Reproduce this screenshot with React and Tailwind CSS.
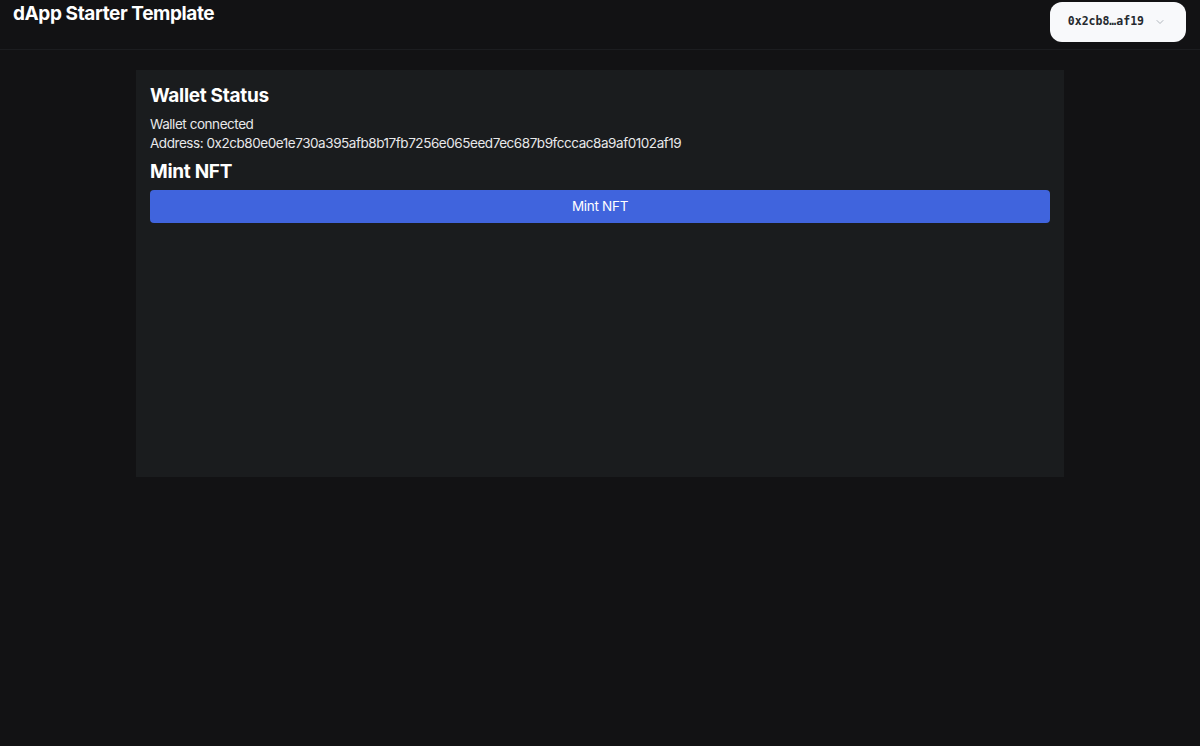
import { ChevronDown } from 'lucide-react'

const ADDRESS = '0x2cb80e0e1e730a395afb8b17fb7256e065eed7ec687b9fcccac8a9af0102af19'

function shorten(addr) {
  return `${addr.slice(0, 6)}…${addr.slice(-4)}`
}

export default function App() {
  return (
    <div className="min-h-screen bg-[#121214] text-white" style={{ fontFamily: 'Inter, "Noto Sans", sans-serif' }}>
      {/* Top bar */}
      <header className="flex items-start justify-between h-[50px] border-b border-[#1c1d20] pl-[13px] pr-[14px]">
        <h1 className="text-[19px] font-bold leading-[28px] tracking-[-0.4px]">dApp Starter Template</h1>
        <button className="mt-[2px] flex items-center gap-[10px] h-[40px] rounded-[12px] bg-[#f8f9fb] pl-[18px] pr-[20px] text-[#25292e]">
          <span className="text-[11.5px] font-bold" style={{ fontFamily: '"DejaVu Sans Mono", monospace' }}>{shorten(ADDRESS)}</span>
          <ChevronDown size={12} strokeWidth={1.5} className="text-[#9aa0a8]" />
        </button>
      </header>

      {/* Main card */}
      <main className="pt-[20px]">
        <section className="mx-auto w-[928px] h-[407px] bg-[#1a1c1e] px-[14px] pt-[12px]">
          <h2 className="text-[19px] font-bold leading-[28px] tracking-[-0.3px]">Wallet Status</h2>
          <div className="mt-[5px] text-[13.5px] leading-[19px] tracking-[-0.45px] text-[#e8e8ea]">
            <p>Wallet connected</p>
            <p>Address: {ADDRESS}</p>
          </div>
          <h2 className="mt-[5px] text-[19px] font-bold leading-[28px] tracking-[-0.3px]">Mint NFT</h2>
          <button className="mt-[4px] w-full h-[33px] rounded-[4px] bg-[#4064dd] text-[13.5px] tracking-[-0.3px] text-white">
            Mint NFT
          </button>
        </section>
      </main>
    </div>
  )
}
